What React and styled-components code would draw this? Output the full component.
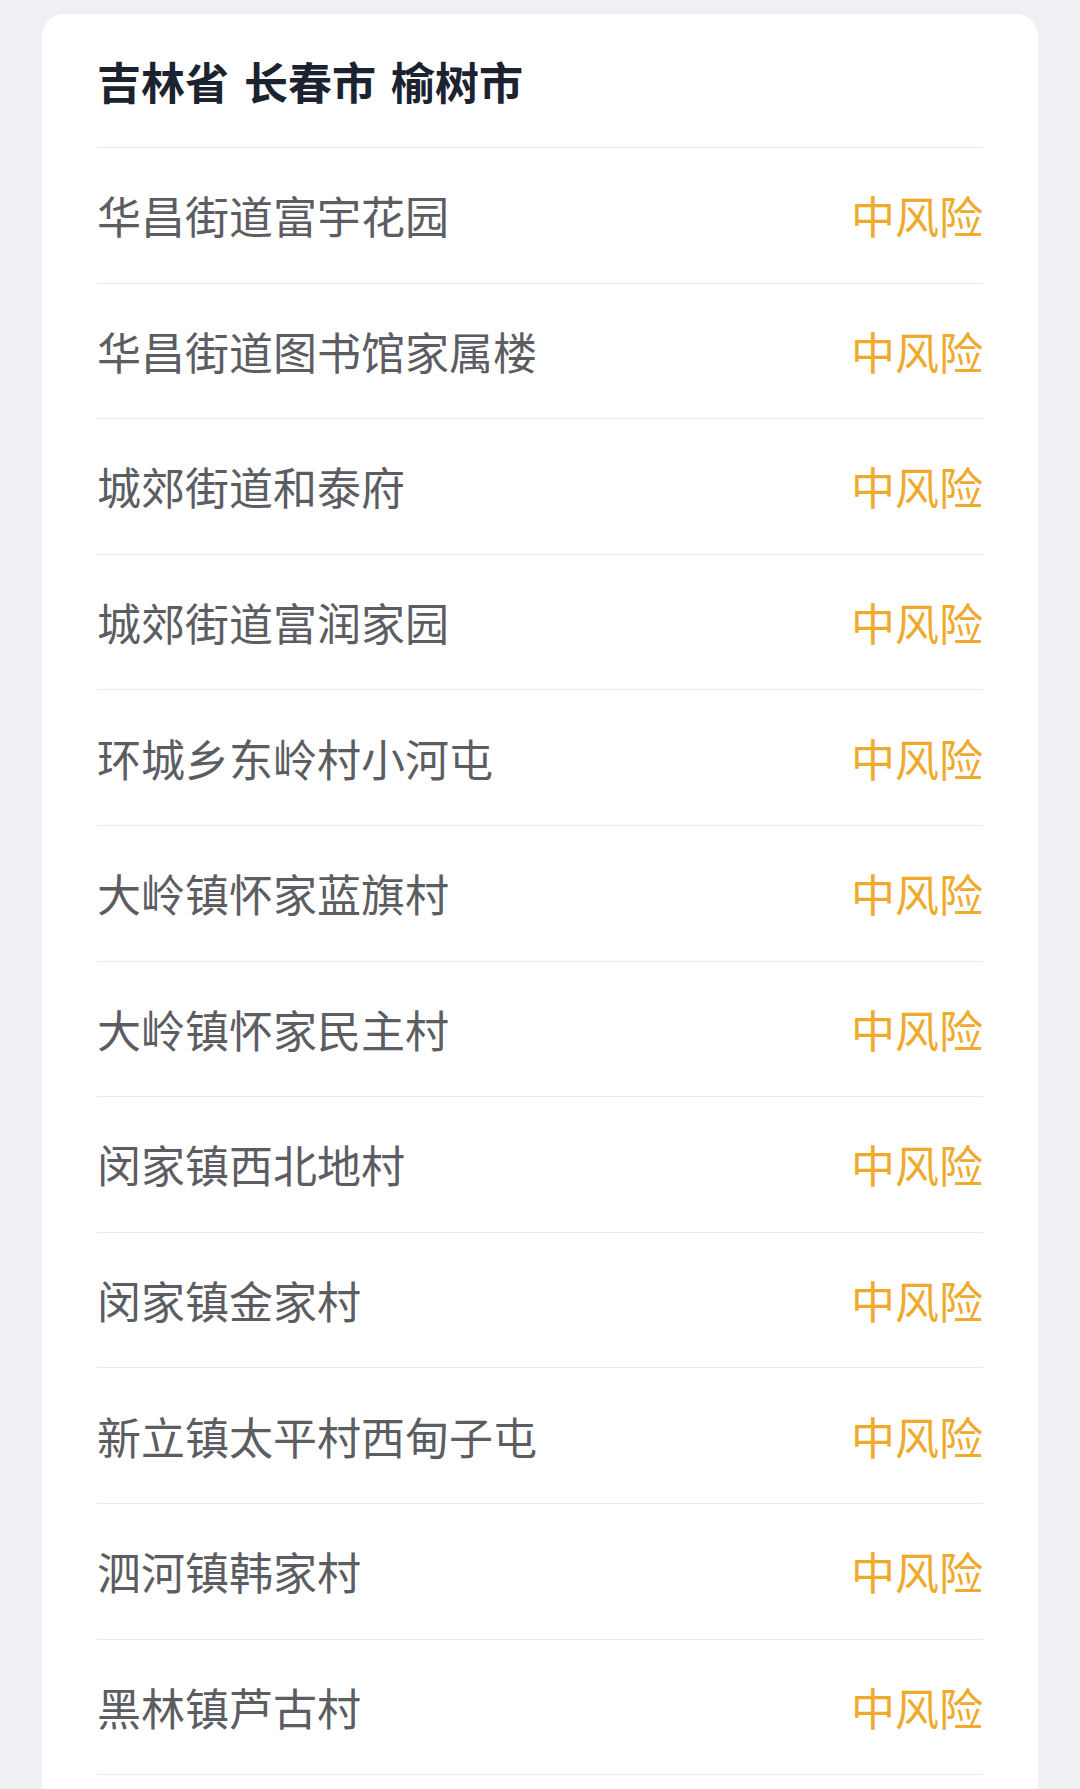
import React from 'react';
import styled, { createGlobalStyle } from 'styled-components';

const GlobalStyle = createGlobalStyle`
  html, body {
    margin: 0;
    padding: 0;
    background: #eef0f4;
  }
  body {
    font-family: "Noto Sans CJK SC", "Noto Sans", sans-serif;
  }
`;

const Page = styled.div`
  height: 1789px;
  overflow: hidden;
  padding: 14px 42px 0;
  box-sizing: border-box;
  background: #eef0f4;
`;

const Card = styled.div`
  background: #ffffff;
  border-radius: 22px;
  padding: 0 55px 40px;
`;

const Header = styled.div`
  height: 133px;
  display: flex;
  align-items: center;
  border-bottom: 1px solid #e9eaed;
  font-size: 44px;
  font-weight: 700;
  color: #1b2331;
  white-space: pre;
  word-spacing: 5px;
`;

const Row = styled.div`
  height: 134.6px;
  display: flex;
  align-items: center;
  justify-content: space-between;
  border-bottom: 1px solid #e9eaed;
  font-size: 44px;
`;

const Place = styled.span`
  color: #5c5d63;
`;

const Risk = styled.span`
  color: ${props => (props.level === 'high' ? '#e5483f' : '#efaa2e')};
`;

const places = [
  '华昌街道富宇花园',
  '华昌街道图书馆家属楼',
  '城郊街道和泰府',
  '城郊街道富润家园',
  '环城乡东岭村小河屯',
  '大岭镇怀家蓝旗村',
  '大岭镇怀家民主村',
  '闵家镇西北地村',
  '闵家镇金家村',
  '新立镇太平村西甸子屯',
  '泗河镇韩家村',
  '黑林镇芦古村',
];

const App = () => (
  <Page>
    <GlobalStyle />
    <Card>
      <Header>吉林省 长春市 榆树市</Header>
      {places.map(name => (
        <Row key={name}>
          <Place>{name}</Place>
          <Risk level="mid">中风险</Risk>
        </Row>
      ))}
    </Card>
  </Page>
);

export default App;
